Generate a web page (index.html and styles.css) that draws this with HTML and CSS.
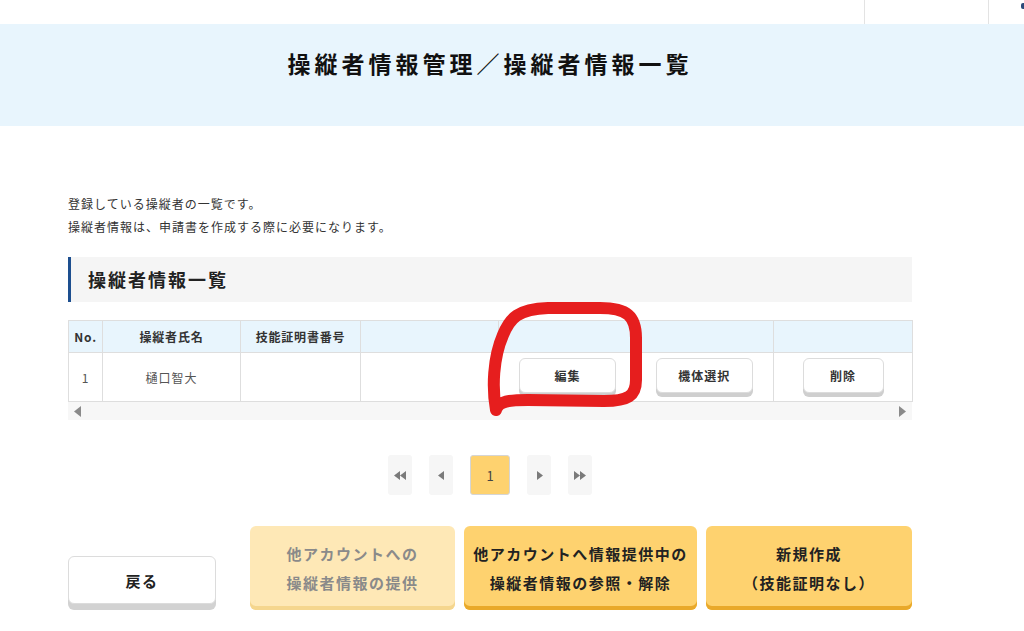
FILE: index.html
```html
<!DOCTYPE html>
<html lang="ja">
<head>
    <meta charset="UTF-8">
    <title>操縦者情報一覧</title>
    <link rel="stylesheet" href="styles.css">
</head>
<body>

    <div class="topbar">
        <div class="topbar-cell wide"></div>
        <div class="topbar-cell narrow"><span class="top-icon"></span></div>
    </div>

    <div class="banner">
        <div class="container">
            <h1 class="page-title">操縦者情報管理／操縦者情報一覧</h1>
        </div>
    </div>

    <div class="container main">
        <div class="intro">
            <p>登録している操縦者の一覧です。</p>
            <p>操縦者情報は、申請書を作成する際に必要になります。</p>
        </div>

        <h2 class="section-title">操縦者情報一覧</h2>

        <div class="table-wrap">
            <table class="pilot-table">
                <colgroup>
                    <col class="c-no">
                    <col class="c-name">
                    <col class="c-license">
                    <col class="c-empty">
                    <col class="c-actions">
                    <col class="c-delete">
                </colgroup>
                <thead>
                    <tr>
                        <th>No.</th>
                        <th>操縦者氏名</th>
                        <th>技能証明書番号</th>
                        <th></th>
                        <th></th>
                        <th></th>
                    </tr>
                </thead>
                <tbody>
                    <tr>
                        <td>1</td>
                        <td>樋口智大</td>
                        <td></td>
                        <td></td>
                        <td class="actions">
                            <button class="row-btn edit">編集</button>
                            <button class="row-btn select">機体選択</button>
                        </td>
                        <td><button class="row-btn delete">削除</button></td>
                    </tr>
                </tbody>
            </table>
            <div class="scroll-row">
                <svg width="8" height="11" viewBox="0 0 8 11"><path d="M7 0 L7 11 L0 5.5 Z" fill="#8a8a8a"/></svg>
                <svg width="8" height="11" viewBox="0 0 8 11"><path d="M1 0 L1 11 L8 5.5 Z" fill="#8a8a8a"/></svg>
            </div>
        </div>

        <div class="pager">
            <span class="page-btn">
                <svg width="14" height="9" viewBox="0 0 14 9"><path d="M7 0 L7 9 L1 4.5 Z M13 0 L13 9 L7 4.5 Z" fill="#7a7a7a"/></svg>
            </span>
            <span class="page-btn">
                <svg width="7" height="9" viewBox="0 0 7 9"><path d="M6 0 L6 9 L0 4.5 Z" fill="#7a7a7a"/></svg>
            </span>
            <span class="page-btn current">1</span>
            <span class="page-btn">
                <svg width="7" height="9" viewBox="0 0 7 9"><path d="M1 0 L1 9 L7 4.5 Z" fill="#7a7a7a"/></svg>
            </span>
            <span class="page-btn">
                <svg width="14" height="9" viewBox="0 0 14 9"><path d="M1 0 L1 9 L7 4.5 Z M7 0 L7 9 L13 4.5 Z" fill="#7a7a7a"/></svg>
            </span>
        </div>

        <div class="bottom-actions">
            <button class="big-btn back">戻る</button>
            <button class="big-btn yellow disabled">他アカウントへの<br>操縦者情報の提供</button>
            <button class="big-btn yellow shared">他アカウントへ情報提供中の<br>操縦者情報の参照・解除</button>
            <button class="big-btn yellow create">新規作成<br>（技能証明なし）</button>
        </div>
    </div>

    <!-- hand-drawn marker over the edit button -->
    <svg class="marker" width="1024" height="631" viewBox="0 0 1024 631">
        <path d="M496 410 C492 388, 493 358, 503 335 C510 318, 518 309, 548 308 L600 308 C627 308, 636 316, 636 338 L636 380 C636 396, 628 401, 604 401 L528 400 C510 400, 498 401, 496 410"
              fill="none" stroke="#e61e1e" stroke-width="12" stroke-linecap="round" stroke-linejoin="round"/>
    </svg>

</body>
</html>
```

FILE: styles.css
```css
body {
    margin: 0;
    font-family: "Noto Sans CJK JP", "Noto Sans", sans-serif;
    color: #333;
    background-color: #fff;
    position: relative;
}
p, h1, h2 {
    margin: 0;
}

.topbar {
    height: 24px;
    display: flex;
    justify-content: flex-end;
}
.topbar-cell {
    border-left: 1px solid #e3e3e3;
    height: 24px;
}
.topbar-cell.wide {
    width: 123px;
}
.topbar-cell.narrow {
    width: 35px;
    position: relative;
}
.top-icon {
    position: absolute;
    right: 0;
    top: 3px;
    width: 3px;
    height: 6px;
    background-color: #2b4a7a;
    border-radius: 2px 0 0 2px;
}

.container {
    margin-left: 68px;
    width: 844px;
}

.banner {
    height: 102px;
    background-color: #e8f5fd;
}
.page-title {
    padding-top: 22px;
    text-align: center;
    font-size: 23px;
    line-height: 34px;
    font-weight: bold;
    letter-spacing: 4px;
    color: #111;
}

.intro {
    padding-top: 66px;
    font-size: 12px;
    line-height: 23px;
    letter-spacing: 1px;
    color: #333;
}

.section-title {
    margin-top: 19px;
    height: 45px;
    line-height: 45px;
    background-color: #f5f5f5;
    border-left: 3px solid #1d4f8f;
    padding-left: 17px;
    font-size: 18px;
    font-weight: bold;
    letter-spacing: 2px;
    color: #222;
}

.table-wrap {
    margin-top: 18px;
}
.pilot-table {
    width: 100%;
    border-collapse: collapse;
    table-layout: fixed;
}
.c-no { width: 34px; }
.c-name { width: 138px; }
.c-license { width: 120px; }
.c-empty { width: 138px; }
.c-actions { width: 275px; }
.c-delete { width: 139px; }

.pilot-table th,
.pilot-table td {
    border: 1px solid #dedede;
    text-align: center;
    padding: 0;
}
.pilot-table th {
    height: 31px;
    background-color: #e8f5fd;
    font-size: 12px;
    font-weight: bold;
    letter-spacing: 0.8px;
    color: #333;
}
.pilot-table td {
    height: 48px;
    font-size: 12px;
    letter-spacing: 1px;
    color: #555;
}
.pilot-table td.actions {
    text-align: left;
    padding-left: 20px;
}

.row-btn {
    font-family: inherit;
    font-size: 12px;
    font-weight: bold;
    letter-spacing: 1px;
    color: #333;
    background-color: #fff;
    border: 1px solid #dcdcdc;
    border-radius: 6px;
    box-shadow: 0 4px 0 #cfcfcf;
    height: 35px;
    margin-bottom: 4px;
    cursor: pointer;
}
.row-btn.edit { width: 97px; }
.row-btn.select { width: 97px; margin-left: 36px; }
.row-btn.delete { width: 81px; }

.scroll-row {
    height: 18px;
    background-color: #f7f7f7;
    display: flex;
    justify-content: space-between;
    align-items: center;
    padding: 0 6px;
}

.pager {
    margin-top: 35px;
    display: flex;
    justify-content: center;
    gap: 17px;
}
.page-btn {
    width: 24px;
    height: 40px;
    background-color: #f6f6f6;
    border-radius: 3px;
    display: flex;
    align-items: center;
    justify-content: center;
}
.page-btn.current {
    width: 38px;
    height: 38px;
    background-color: #fed26f;
    border: 1px solid #d5d5d5;
    font-size: 13px;
    color: #444;
}

.bottom-actions {
    margin-top: 31px;
    display: flex;
    align-items: flex-end;
    gap: 9px;
}
.big-btn {
    font-family: inherit;
    font-size: 15px;
    font-weight: bold;
    line-height: 29px;
    letter-spacing: 1.5px;
    border-radius: 6px;
    cursor: pointer;
    padding: 0;
}
.big-btn.back {
    width: 148px;
    height: 48px;
    margin-bottom: 6px;
    margin-right: 25px;
    background-color: #fff;
    border: 1px solid #dcdcdc;
    box-shadow: 0 6px 0 #d2d2d2;
    color: #222;
}
.big-btn.yellow {
    height: 84px;
    border: none;
    background-color: #fed26f;
    box-shadow: inset 0 -4px 0 #e9a92a;
    color: #222;
}
.big-btn.disabled {
    width: 205px;
    background-color: #fee8b6;
    box-shadow: inset 0 -4px 0 #f5d68e;
    color: #8a8a8a;
}
.big-btn.shared {
    width: 233px;
}
.big-btn.create {
    width: 206px;
}

.marker {
    position: absolute;
    left: 0;
    top: 0;
    pointer-events: none;
}
```
